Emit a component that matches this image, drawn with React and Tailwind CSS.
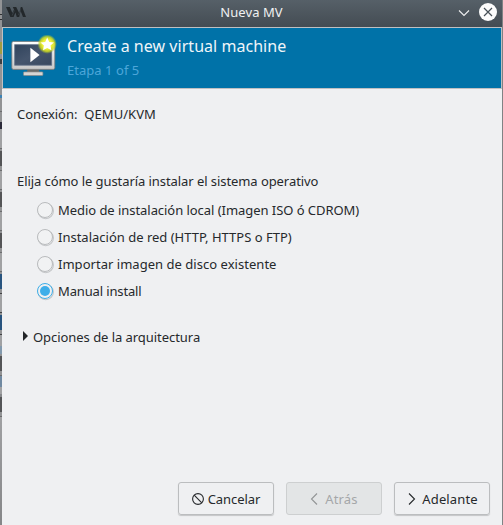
const strip = [
  [14, 'bg-[#929395]'],
  [1, 'bg-[#303133]'],
  [4, 'bg-[#929395]'],
  [1, 'bg-[#303133]'],
  [22, 'bg-[#929395]'],
  [12, 'bg-[#a09c42]'],
  [5, 'bg-[#929395]'],
  [5, 'bg-[#3c3f43]'],
  [31, 'bg-[#929395]'],
  [3, 'bg-[#3d82b4]'],
  [13, 'bg-[#929395]'],
  [1, 'bg-[#6c6d6f]'],
  [10, 'bg-[#929395]'],
  [7, 'bg-[#2b2a3a]'],
  [19, 'bg-[#a0a1a3]'],
  [1, 'bg-[#6c6d6f]'],
  [2, 'bg-[#929395]'],
  [15, 'bg-[#545557]'],
  [4, 'bg-[#929395]'],
  [1, 'bg-[#6c6d6f]'],
  [18, 'bg-[#a0a1a3]'],
  [1, 'bg-[#6c6d6f]'],
  [2, 'bg-[#929395]'],
  [15, 'bg-[#545557]'],
  [4, 'bg-[#929395]'],
  [1, 'bg-[#6c6d6f]'],
  [18, 'bg-[#a0a1a3]'],
  [1, 'bg-[#6c6d6f]'],
  [2, 'bg-[#929395]'],
  [15, 'bg-[#545557]'],
  [4, 'bg-[#929395]'],
  [1, 'bg-[#6c6d6f]'],
  [18, 'bg-[#a0a1a3]'],
  [1, 'bg-[#6c6d6f]'],
  [2, 'bg-[#929395]'],
  [15, 'bg-[#28547f]'],
  [4, 'bg-[#929395]'],
  [1, 'bg-[#404143]'],
  [18, 'bg-[#a0a1a3]'],
  [1, 'bg-[#404143]'],
  [2, 'bg-[#929395]'],
  [15, 'bg-[#28547f]'],
  [4, 'bg-[#929395]'],
  [1, 'bg-[#404143]'],
  [11, 'bg-[#a0a1a3]'],
  [8, 'bg-[#8299ad]'],
  [2, 'bg-[#929395]'],
  [15, 'bg-[#545557]'],
  [4, 'bg-[#929395]'],
  [1, 'bg-[#6c6d6f]'],
  [11, 'bg-[#7089a1]'],
  [7, 'bg-[#a0a1a3]'],
  [3, 'bg-[#85878a]'],
  [15, 'bg-[#545557]'],
  [4, 'bg-[#929395]'],
  [1, 'bg-[#6c6d6f]'],
];

const options = [
  { label: 'Medio de instalación local (Imagen ISO ó CDROM)' },
  { label: 'Instalación de red (HTTP, HTTPS o FTP)', spacing: 'tracking-normal' },
  { label: 'Importar imagen de disco existente', spacing: 'tracking-[0.03px]' },
  { label: 'Manual install', checked: true, spacing: 'tracking-[-0.14px]' },
];

function DesktopEdge() {
  return (
    <div className="flex w-[2px] shrink-0 flex-col overflow-hidden">
      {strip.map(([height, color], i) => (
        <div key={i} className={`shrink-0 ${color}`} style={{ height }} />
      ))}
      <div className="flex-1 bg-linear-to-b from-[#a0a1a3] to-[#858688]" />
    </div>
  );
}

function TitleBar() {
  return (
    <div className="flex h-[27px] shrink-0 items-center bg-linear-to-b from-[#566068] to-[#444c53] pr-[5px] pl-[4px]">
      <svg width="20" height="12" viewBox="0 0 20 12" className="mb-[3px]" fill="none">
        <path d="M0 1h3.8l2.6 6L8 3.4 6.8 1h3.4l3 6.2L14.8 1h1.4L20 11h-3l-2.4-6-1.4 6h-2.4L9.4 6.4 7.6 11H4.4z" fill="#23282b" />
        <path d="M8.3 4.4L6.2 9.6M14.6 3.4l-2 5.6" stroke="#464f56" strokeWidth="0.6" />
      </svg>
      <div className="flex-1 pb-[3px] pl-[19px] text-center text-[13px] leading-[18px] tracking-[0.06px] text-[#eff0f1]">Nueva MV</div>
      <svg width="12" height="8" viewBox="0 0 12 8" className="mr-[9px] mb-[2px]" fill="none" stroke="#eff0f1" strokeWidth="1.1">
        <path d="M1 1.5l5 5 5-5" />
      </svg>
      <svg width="18" height="18" viewBox="0 0 18 18" className="mb-[3px]" fill="none">
        <circle cx="9" cy="9" r="9" fill="#fcfcfc" />
        <path d="M5 5l8 8M13 5l-8 8" stroke="#475057" strokeWidth="1.2" />
      </svg>
    </div>
  );
}

function MachineIcon() {
  return (
    <svg width="48" height="44" viewBox="0.8 0.3 48 44" className="shrink-0">
      <defs>
        <linearGradient id="frame" x1="0" y1="0" x2="0" y2="1">
          <stop offset="0" stopColor="#ffffff" />
          <stop offset="1" stopColor="#c8c8c8" />
        </linearGradient>
        <linearGradient id="screen" x1="0" y1="0" x2="1" y2="1">
          <stop offset="0" stopColor="#30435c" />
          <stop offset="0.5" stopColor="#45556d" />
          <stop offset="1" stopColor="#38485f" />
        </linearGradient>
        <radialGradient id="glow">
          <stop offset="0" stopColor="#fafa80" />
          <stop offset="0.5" stopColor="#ecef35" />
          <stop offset="0.75" stopColor="#d0dc22" stopOpacity="0.85" />
          <stop offset="1" stopColor="#a0c030" stopOpacity="0" />
        </radialGradient>
      </defs>
      <path d="M17 33h12v5H17z" fill="#686a69" />
      <rect x="13.3" y="37.2" width="19.4" height="3.6" rx="0.8" fill="#d5d5d3" stroke="#898a88" strokeWidth="0.7" />
      <rect x="1.6" y="6.7" width="43" height="28" rx="1.6" fill="url(#frame)" stroke="#777" strokeWidth="0.8" />
      <rect x="4.5" y="10" width="37" height="20.5" fill="url(#screen)" stroke="#64748a" strokeWidth="0.8" />
      <path d="M20.2 13v14.5l9.2-7.2z" fill="#fff" />
      <circle cx="37" cy="9.4" r="9.8" fill="url(#glow)" />
      <path d="M37 2.9l2 4.3 4.7.5-3.4 3.2.9 4.7-4.2-2.3-4.2 2.3.9-4.7-3.4-3.2 4.7-.5z" fill="#fff" />
    </svg>
  );
}

function Header() {
  return (
    <div className="h-[62px] shrink-0 border border-[#bfc0c2] bg-[#0072a8]">
      <div className="flex pt-[7px] pl-[8px]">
        <MachineIcon />
        <div className="pl-[8px] text-[#eff5f9]">
          <div className="text-[16px] leading-[22px] tracking-[0.04px] whitespace-nowrap">Create a new virtual machine</div>
          <div className="mt-[4px] leading-[18px] tracking-[0.04px] text-[#4da6d9]">Etapa 1 of 5</div>
        </div>
      </div>
    </div>
  );
}

function Radio({ checked }) {
  return (
    <svg width="18" height="18" viewBox="0 0 18 18" className="mt-[2px] shrink-0" fill="none">
      <circle cx="8.7" cy="9" r="7.7" stroke="#c4c6c8" strokeWidth="1.1" />
      <circle cx="8" cy="8" r="7.5" fill={checked ? '#eff0f1' : '#f1f2f3'} stroke={checked ? '#3daee9' : '#b9bbbd'} />
      {checked && <circle cx="8" cy="8" r="5" fill="#3daee9" />}
    </svg>
  );
}

function Option({ label, checked, spacing = '' }) {
  return (
    <label className="flex h-[27px] items-center">
      <Radio checked={checked} />
      <span className={`pl-[3px] whitespace-nowrap ${spacing}`}>{label}</span>
    </label>
  );
}

function Footer() {
  const base = 'flex h-[33px] w-[96px] items-center justify-center rounded-[3px] border';
  return (
    <div className="mt-auto flex shrink-0 justify-end gap-[12px] pr-[12px] pb-[10px]">
      <button className={`${base} border-[#bbbdbf] shadow-[0_1px_1px_rgba(0,0,0,0.18)]`}>
        <svg width="12" height="12" viewBox="0 0 12 12" className="mr-[4px]" fill="none" stroke="#26292c" strokeWidth="1.1">
          <circle cx="6" cy="6" r="5.4" />
          <path d="M2.2 2.2l7.6 7.6" />
        </svg>
        Cancelar
      </button>
      <button disabled className={`${base} border-[#cdcfd0] bg-[#e3e5e6] text-[#a5a7a9]`}>
        <svg width="8" height="12" viewBox="0 0 8 12" className="mr-[7px]" fill="none" stroke="#929496" strokeWidth="1.1">
          <path d="M7 .5L1.5 6 7 11.5" />
        </svg>
        <span className="tracking-[0.15px]">Atrás</span>
      </button>
      <button className={`${base} border-[#bbbdbf] shadow-[0_1px_1px_rgba(0,0,0,0.18)]`}>
        <svg width="8" height="12" viewBox="0 0 8 12" className="mr-[6px] ml-[2px]" fill="none" stroke="#26292c" strokeWidth="1.1">
          <path d="M1 .5L6.5 6 1 11.5" />
        </svg>
        <span className="tracking-[0.12px]">Adelante</span>
      </button>
    </div>
  );
}

export default function App() {
  return (
    <div className="flex h-[525px] w-[503px] overflow-hidden bg-[#eff0f2] font-['Noto_Sans',sans-serif] text-[13px] leading-[18px] tracking-[-0.05px] text-[#26292c]">
      <DesktopEdge />
      <div className="flex min-w-0 flex-1 flex-col">
        <TitleBar />
        <Header />
        <div className="flex flex-1 flex-col">
          <div className="flex gap-[7px] pt-[16px] pl-[15px]">
            <span>Conexión:</span>
            <span className="tracking-[0.05px]">QEMU/KVM</span>
          </div>
          <div className="pt-[49px] pl-[15px] tracking-[-0.07px] whitespace-nowrap">Elija cómo le gustaría instalar el sistema operativo</div>
          <div className="pt-[6px] pl-[35px]">
            {options.map((o) => (
              <Option key={o.label} {...o} />
            ))}
          </div>
          <div className="flex items-center pt-[24px] pl-[21px]">
            <svg width="5" height="10" viewBox="0 0 5 10" className="mb-[3px]">
              <path d="M0 0l5 5-5 5z" fill="#232629" />
            </svg>
            <span className="pl-[5px]">Opciones de la arquitectura</span>
          </div>
          <Footer />
        </div>
      </div>
      <div className="w-[1px] shrink-0 bg-[#808284]" />
    </div>
  );
}
